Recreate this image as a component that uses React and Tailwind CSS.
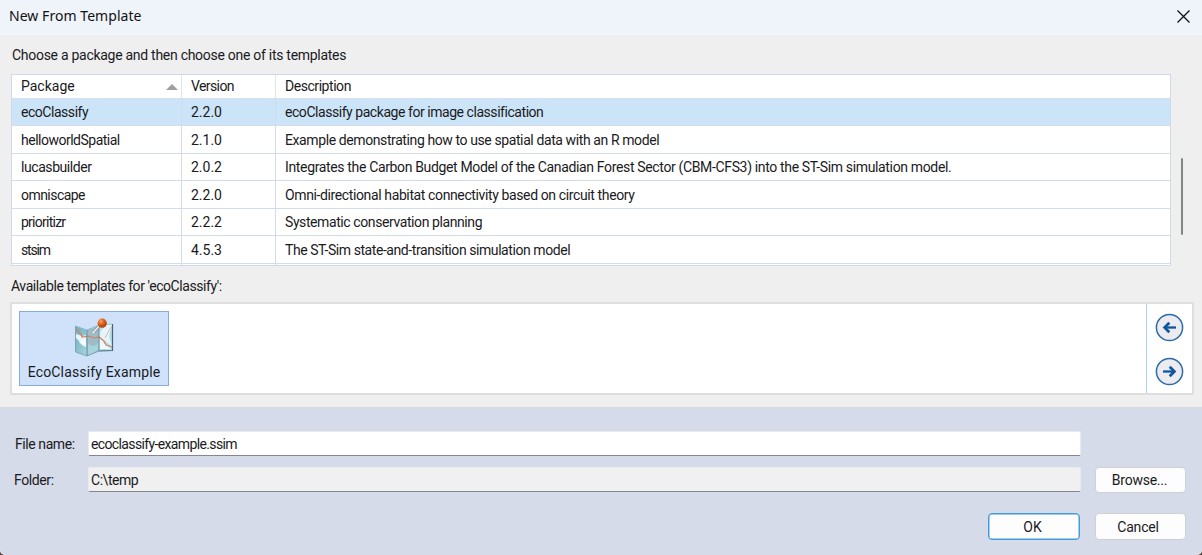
const packages = [
  ['ecoClassify', '2.2.0', 'ecoClassify package for image classification', 'tracking-[-0.46px]', 'tracking-[-0.45px]', 'h-[27px]'],
  ['helloworldSpatial', '2.1.0', 'Example demonstrating how to use spatial data with an R model', 'tracking-[-0.5px]', 'tracking-[-0.4px]', 'h-[28px]'],
  ['lucasbuilder', '2.0.2', 'Integrates the Carbon Budget Model of the Canadian Forest Sector (CBM-CFS3) into the ST-Sim simulation model.', 'tracking-[-0.43px]', 'tracking-[-0.35px]', 'h-[27px]'],
  ['omniscape', '2.2.0', 'Omni-directional habitat connectivity based on circuit theory', 'tracking-[-0.54px]', 'tracking-[-0.38px]', 'h-[28px]'],
  ['prioritizr', '2.2.2', 'Systematic conservation planning', 'tracking-[-0.75px]', 'tracking-[-0.41px]', 'h-[27px]'],
  ['stsim', '4.5.3', 'The ST-Sim state-and-transition simulation model', 'tracking-[-1.2px]', 'tracking-[-0.43px]', 'h-[28px]'],
];

const cell = 'flex items-center pl-[9px]';

function MapIcon() {
  return (
    <svg width="40" height="40" viewBox="0 0 40 40" fill="none">
      <defs>
        <linearGradient id="fold" x1="0" y1="0" x2="1" y2="1">
          <stop offset="0" stopColor="#6faebf" />
          <stop offset="1" stopColor="#a9d6df" />
        </linearGradient>
        <radialGradient id="pin" cx="0.35" cy="0.3" r="0.75">
          <stop offset="0" stopColor="#f9a36a" />
          <stop offset="0.5" stopColor="#db5c17" />
          <stop offset="1" stopColor="#a93c06" />
        </radialGradient>
      </defs>
      <path d="M1.5 8 13 12V38L1.5 34Z" fill="url(#fold)" />
      <path d="M13 12 25 7V33L13 38Z" fill="#9ebcc5" />
      <path d="M25 7 38.5 6V32.5L25 33Z" fill="#b5dfe9" />
      <path d="M2 16 8 18 12 17 11 25 6 24 2 20Z" fill="#e6f5f8" />
      <path d="M5 24 12 20V29L8 27Z" fill="#f3fafb" />
      <path d="M14 25C17 29 21 29 24 25V32L14 37Z" fill="#a5d5dc" />
      <path d="M26 14 32 7 38 6 35 18 38 28 31 23 26 25Z" fill="#e4f4f8" />
      <path d="M26 22 37 31H26Z" fill="#eef9fb" />
      <path d="M2 11 7 16 8 19 14 18 20 20 25 19 30 23 32 27 38 29" stroke="#d97e5d" strokeWidth="1.2" />
      <path d="M31 20 37 9" stroke="#e2a58f" strokeWidth="0.8" />
      <path d="M1.5 8 13 12 25 7 38.5 6" stroke="#8ab3bf" strokeWidth="0.7" />
      <path d="M1.5 8V34L13 38 25 33" stroke="#7599a7" strokeWidth="0.8" />
      <path d="M25 33 38.5 32.5V6" stroke="#47647a" strokeWidth="1.2" />
      <path d="M13 12V38M25 7V33" stroke="#6b8793" strokeWidth="0.8" />
      <path d="M20 14 26 7" stroke="#72868e" strokeWidth="2.5" />
      <path d="M19 15 25 8" stroke="#f6f8f9" strokeWidth="1.3" />
      <circle cx="28.2" cy="5.2" r="4.6" fill="url(#pin)" />
    </svg>
  );
}

function ArrowButton({ left }) {
  return (
    <button className="block size-[29px]" aria-label={left ? 'Previous' : 'Next'}>
      <svg width="29" height="29" viewBox="0 0 29 29" fill="none">
        <circle cx="14.5" cy="14.5" r="13.1" fill="#ebebf0" stroke="#2a6aa6" strokeWidth="1.5" />
        <g transform={left ? undefined : 'matrix(-1 0 0 1 29 0)'} stroke="#0c57a0">
          <path d="M9 14.5H21" strokeWidth="2.3" />
          <path d="M14.3 9.8 9.6 14.5 14.3 19.2" strokeWidth="2.7" />
        </g>
      </svg>
    </button>
  );
}

export default function App() {
  return (
    <div className="w-[1202px] bg-[#5b4038]">
      <div className="flex h-[555px] flex-col overflow-hidden rounded-b-[5px] bg-[#efefef] font-['Roboto',sans-serif] text-[14px] leading-[18px] text-[#1a1a22]">
        <header className="flex h-[35px] shrink-0 items-center justify-between bg-[#eff3fa] pr-[12px] pb-[3px] pl-[9px]">
          <h1 className="font-['Noto_Sans',sans-serif] text-[14px] tracking-[0.05px] text-[#111]">New From Template</h1>
          <svg width="13" height="13" viewBox="0 0 13 13" stroke="#111" strokeWidth="1.3">
            <path d="M0.5 0.5 12.5 12.5M12.5 0.5 0.5 12.5" />
          </svg>
        </header>

        <main className="flex h-[372px] shrink-0 flex-col pl-[11px]">
          <p className="mt-[11px] h-[18px] pl-px tracking-[-0.28px]">Choose a package and then choose one of its templates</p>

          <div className="mt-[10px] flex h-[192px]">
            <div className="flex w-[1160px] flex-col overflow-hidden border border-[#d0d9e9] bg-white">
              <div className="grid h-[24px] shrink-0 grid-cols-[170px_94px_1fr] border-b border-[#d5deec]">
                <div className={`${cell} justify-between border-r border-[#dfe4ef] pr-[3px]`}>
                  <span className="-mt-px">Package</span>
                  <svg width="12" height="6" viewBox="0 0 12 6"><path d="M6 0 12 6H0Z" fill="#a0a0a0" /></svg>
                </div>
                <div className={`${cell} border-r border-[#dfe4ef]`}><span className="-mt-px tracking-[-0.6px]">Version</span></div>
                <div className={cell}><span className="-mt-px tracking-[-0.45px]">Description</span></div>
              </div>
              {packages.map(([name, version, text, nameFit, textFit, height], i) => (
                <div key={name} className={`grid shrink-0 grid-cols-[170px_94px_1fr] border-b border-[#d3dcea] ${height} ${i === 0 ? 'bg-[#cce4f7]' : ''}`}>
                  <div className={`${cell} border-r border-[#d5dbea]`}><span className={nameFit}>{name}</span></div>
                  <div className={`${cell} border-r border-[#d5dbea]`}><span>{version}</span></div>
                  <div className={cell}><span className={textFit}>{text}</span></div>
                </div>
              ))}
              <div className="grid flex-1 grid-cols-[170px_94px_1fr]">
                <div className="border-r border-[#d5dbea]" />
                <div className="border-r border-[#d5dbea]" />
              </div>
            </div>
            <div className="mt-[84px] ml-[10px] h-[77px] w-[2px] rounded-full bg-[#858585]" />
          </div>

          <p className="mt-[11px] h-[18px] tracking-[-0.42px]">Available templates for 'ecoClassify':</p>

          <div className="mt-[7px] -ml-px flex h-[93px] w-[1184px] border-2 border-[#dedede] bg-white">
            <div className="flex-1 p-[7px]">
              <div className="flex h-[75px] w-[150px] flex-col items-center border border-[#86abdc] bg-[#cfe2fa] pt-[6px]">
                <MapIcon />
                <span className="mt-[5px] whitespace-nowrap tracking-[0.16px]">EcoClassify Example</span>
              </div>
            </div>
            <div className="flex w-[46px] flex-col items-center gap-[15px] border-l border-[#a8d0f8] pt-[9px]">
              <ArrowButton left />
              <ArrowButton />
            </div>
          </div>
        </main>

        <footer className="flex flex-1 flex-col border-t border-[#d9dbe0] bg-[#d5dbe9] pr-[16px] pl-[14px]">
          <div className="mt-[23px] flex h-[25px] items-center">
            <label className="w-[74px] pl-px tracking-[-0.42px]">File name:</label>
            <div className="flex h-[25px] w-[993px] items-center rounded-[2px] border border-[#e8eaf0] border-b-[#85878c] bg-white pl-[2px]"><span className="tracking-[-0.63px]">ecoclassify-example.ssim</span></div>
          </div>
          <div className="mt-[10px] flex h-[27px] items-center">
            <label className="w-[74px] tracking-[-0.4px]">Folder:</label>
            <div className="flex h-[25px] w-[993px] items-center rounded-[2px] border border-[#e8eaf0] border-b-[#85878c] bg-[#f0f0f0] pl-[2px]"><span className="tracking-[-0.45px]">C:\temp</span></div>
            <button className="ml-[14px] h-[26px] w-[91px] rounded-[4px] border border-[#cfd0d5] bg-[#fdfdfd] pr-[2px]"><span className="tracking-[-0.25px]">Browse...</span></button>
          </div>
          <div className="mt-[20px] flex justify-end gap-[15px]">
            <button className="h-[27px] w-[92px] rounded-[4px] border border-[#439bdc] bg-[#fdfdfd] pr-[3px] shadow-[inset_0_0_0_0.5px_#439bdc]">OK</button>
            <button className="h-[27px] w-[91px] rounded-[4px] border border-[#cfd0d5] bg-[#fdfdfd] pr-[5px]"><span className="tracking-[-0.2px]">Cancel</span></button>
          </div>
        </footer>
      </div>
    </div>
  );
}
